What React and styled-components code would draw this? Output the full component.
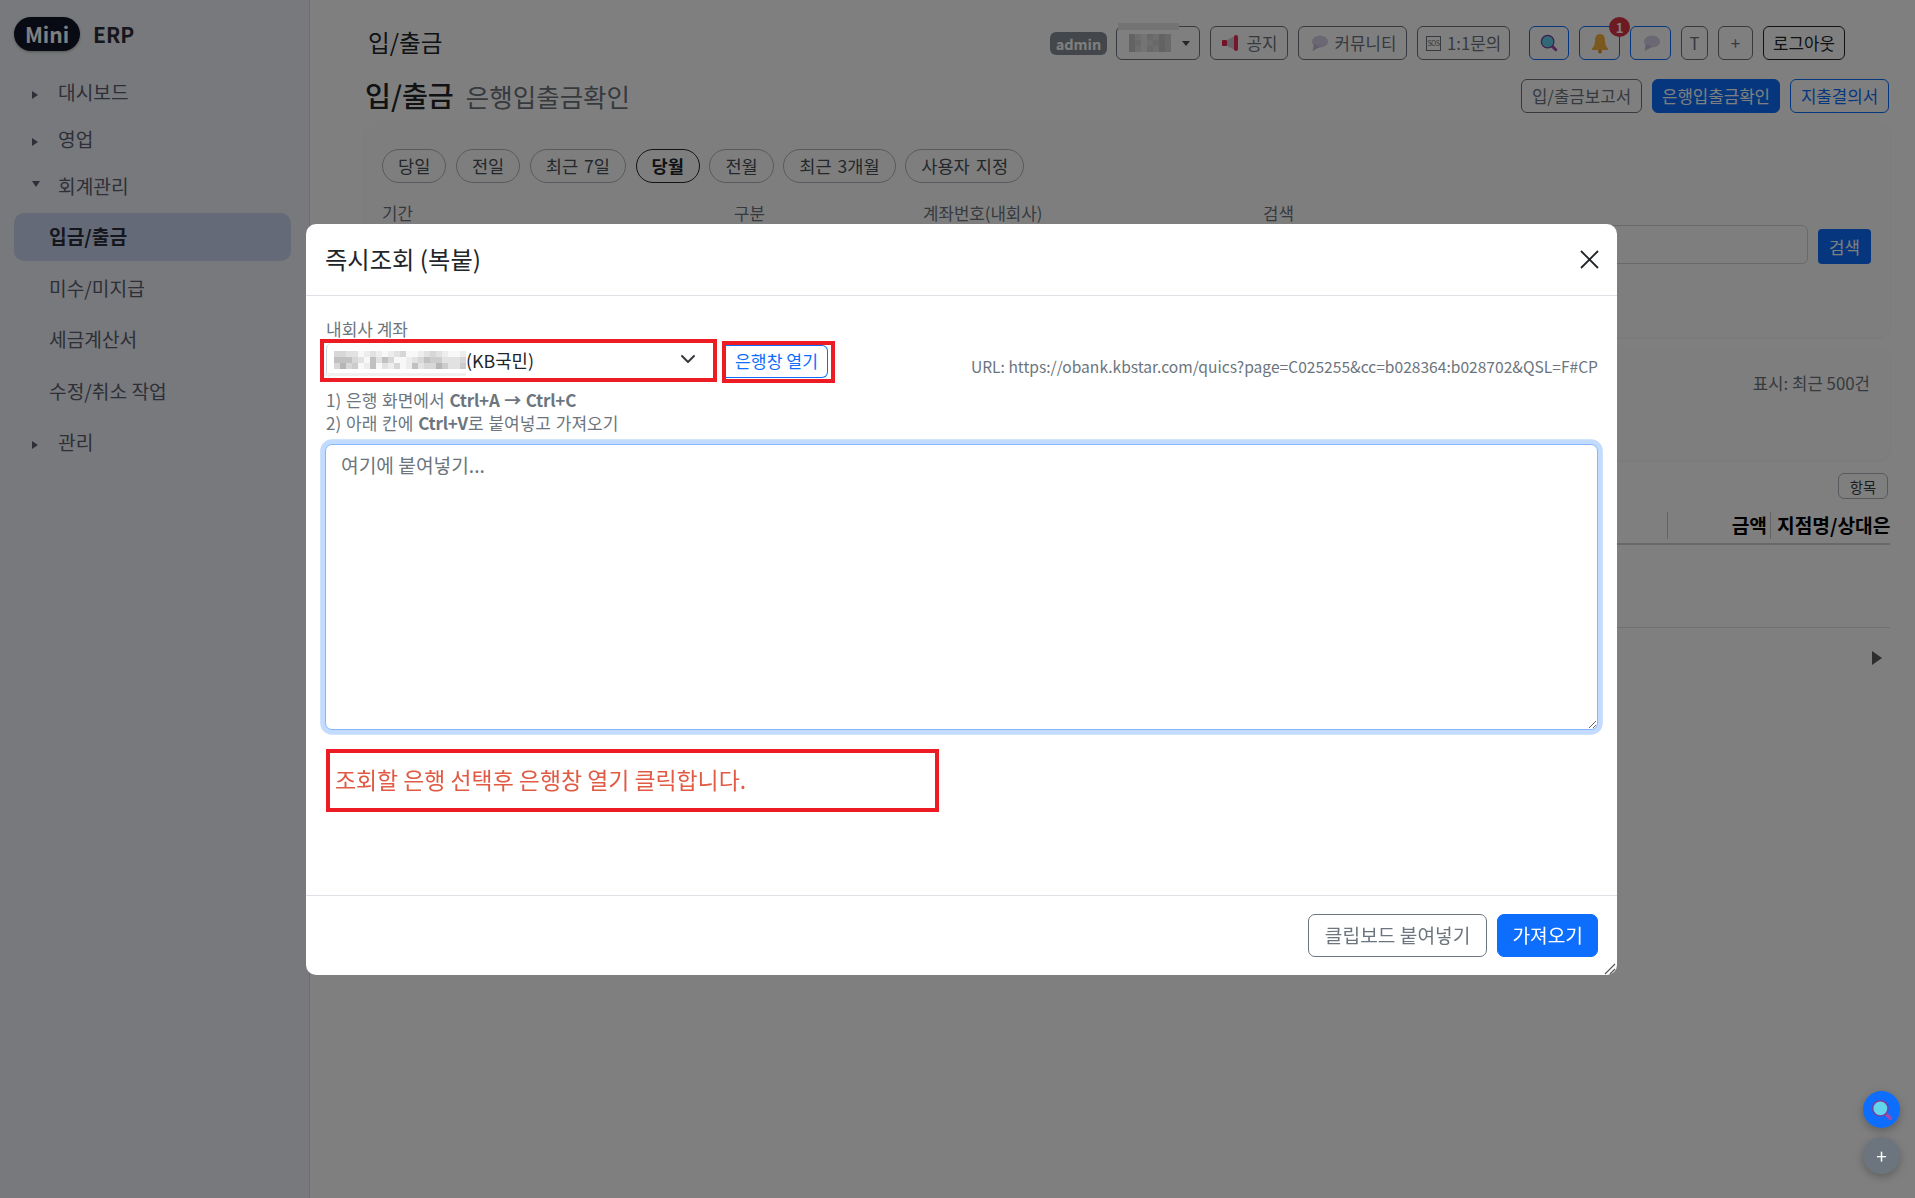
import React from "react";
import styled, { createGlobalStyle } from "styled-components";

const FONT = `"Noto Sans CJK KR", "Noto Sans", sans-serif`;

const GlobalStyle = createGlobalStyle`
  html, body {
    margin: 0;
    padding: 0;
    height: 100%;
    overflow: hidden;
    background: #fff;
    font-family: ${FONT};
    color: #212529;
  }
  * { box-sizing: border-box; }
`;

const MegaphoneIcon = () => (
  <svg width="20" height="20" viewBox="0 0 20 20">
    <rect x="1" y="7" width="5" height="6" rx="1" fill="#e8254e" />
    <path d="M6 7 L14 3 V17 L6 13 Z" fill="#c9c9d2" />
    <rect x="13" y="2" width="4" height="16" rx="2" fill="#ee2a5a" />
  </svg>
);

const BubbleIcon = () => (
  <svg width="20" height="20" viewBox="0 0 20 20">
    <ellipse cx="11" cy="8.5" rx="8" ry="6" fill="#d6cee6" />
    <path d="M5 11 L3.5 18 L11 14 Z" fill="#c4b9d8" />
  </svg>
);

const LensIcon = ({ size = 18 }) => (
  <svg width={size} height={size} viewBox="0 0 20 20">
    <path d="M12 12 L17.5 17.5" stroke="#a348a8" strokeWidth="3.4" strokeLinecap="round" />
    <circle cx="8.5" cy="8.5" r="7" fill="#62d4ec" stroke="#7a3f9c" strokeWidth="1.4" />
  </svg>
);

const BellIcon = () => (
  <svg width="20" height="22" viewBox="0 0 20 22">
    <path d="M10 2 C6 2 5 5.5 5 9 C5 12.5 4 14.5 2 16.5 V18 H18 V16.5 C16 14.5 15 12.5 15 9 C15 5.5 14 2 10 2 Z" fill="#f5b13c" />
    <circle cx="10" cy="19.5" r="2" fill="#e8902a" />
  </svg>
);

const ChevronDown = () => (
  <svg width="16" height="16" viewBox="0 0 16 16">
    <path d="M2 5 L8 11 L14 5" fill="none" stroke="#343a40" strokeWidth="2" strokeLinecap="round" strokeLinejoin="round" />
  </svg>
);

const CloseIcon = () => (
  <svg width="19" height="19" viewBox="0 0 19 19">
    <path d="M1 1 L18 18 M18 1 L1 18" stroke="#212529" strokeWidth="1.8" />
  </svg>
);

const ResizeGrip = () => (
  <svg width="12" height="12" viewBox="0 0 12 12">
    <path d="M1 11 L11 1 M6 11 L11 6" stroke="#555" strokeWidth="1.2" />
  </svg>
);

// 가려진 값(모자이크), 숫자가 클수록 어두움
const Mosaic = ({ rows, cell, top }) => (
  <svg width={rows[0].length * cell} height={rows.length * cell} shapeRendering="crispEdges">
    {rows.map((row, y) =>
      row.split("").map((c, x) => {
        const v = top - Number(c) * 11;
        return <rect key={`${x}-${y}`} x={x * cell} y={y * cell} width={cell} height={cell} fill={`rgb(${v},${v},${v})`} />;
      })
    )}
  </svg>
);

const ACCOUNT_MOSAIC = ["3322012101230012321001", "5553205253001235442223", "3634015021301523364224"];
const USER_MOSAIC = ["3102132", "3201232", "3102132"];

const PERIODS = ["당일", "전일", "최근 7일", "당월", "전월", "최근 3개월", "사용자 지정"];

const App = () => (
  <>
    <GlobalStyle />
    <Page>
      <Sidebar>
        <Logo>
          <LogoPill>Mini</LogoPill>
          <LogoText>ERP</LogoText>
        </Logo>
        <Nav>
          <NavItem><Caret />대시보드</NavItem>
          <NavItem><Caret />영업</NavItem>
          <NavItem><Caret $open />회계관리</NavItem>
          <SubItem $active>입금/출금</SubItem>
          <SubItem>미수/미지급</SubItem>
          <SubItem>세금계산서</SubItem>
          <SubItem>수정/취소 작업</SubItem>
          <NavItem $last><Caret />관리</NavItem>
        </Nav>
      </Sidebar>

      <Main>
        <TopBar>
          <TopTitle>입/출금</TopTitle>
          <TopActions>
            <RoleBadge>admin</RoleBadge>
            <UserButton>
              <UserStrip />
              <Mosaic rows={USER_MOSAIC} cell={6} top={232} />
              <SmallCaret />
            </UserButton>
            <ToolButton $w={78}><MegaphoneIcon />공지</ToolButton>
            <ToolButton $w={109}><BubbleIcon />커뮤니티</ToolButton>
            <ToolButton $w={93}><SosMark>SOS</SosMark>1:1문의</ToolButton>
            <ToolButton $w={40} $tone="blue" $ml={9}><LensIcon /></ToolButton>
            <BellWrap>
              <ToolButton $w={41} $tone="blue"><BellIcon /></ToolButton>
              <CountBadge>1</CountBadge>
            </BellWrap>
            <ToolButton $w={41} $tone="blue"><BubbleIcon /></ToolButton>
            <ToolButton $w={27}>T</ToolButton>
            <ToolButton $w={35}>+</ToolButton>
            <ToolButton $w={82} $tone="dark">로그아웃</ToolButton>
          </TopActions>
        </TopBar>

        <HeadingRow>
          <Heading>입/출금<HeadingSub>은행입출금확인</HeadingSub></Heading>
          <HeadingActions>
            <ToolButton $w={121}>입/출금보고서</ToolButton>
            <ToolButton $w={128} $tone="solid">은행입출금확인</ToolButton>
            <ToolButton $w={99} $tone="blue">지출결의서</ToolButton>
          </HeadingActions>
        </HeadingRow>

        <FilterCard>
          <Pills>
            {PERIODS.map((p) => (
              <Pill key={p} $active={p === "당월"}>{p}</Pill>
            ))}
          </Pills>
          <FilterGrid>
            <Field><FieldLabel>기간</FieldLabel><FieldInput /></Field>
            <Field><FieldLabel>구분</FieldLabel><FieldInput /></Field>
            <Field><FieldLabel>계좌번호(내회사)</FieldLabel><FieldInput /></Field>
            <Field><FieldLabel>검색</FieldLabel><FieldInput /></Field>
            <SearchButton>검색</SearchButton>
          </FilterGrid>
        </FilterCard>

        <SummaryCard>표시: 최근 500건</SummaryCard>

        <ColumnBar><ColumnButton>항목</ColumnButton></ColumnBar>

        <TableHead>
          <HeadCell />
          <HeadCell $right>금액</HeadCell>
          <HeadCell $clip>지점명/상대은행</HeadCell>
        </TableHead>
        <TableEmpty />
        <ScrollRow><ScrollArrow /></ScrollRow>
      </Main>

      <Backdrop />

      <Modal>
        <ModalHeader>
          <ModalTitle>즉시조회 (복붙)</ModalTitle>
          <CloseButton><CloseIcon /></CloseButton>
        </ModalHeader>
        <ModalBody>
          <SmallLabel>내회사 계좌</SmallLabel>
          <AccountRow>
            <SelectMark>
              <AccountSelect>
                <BlurValue>
                  <Mosaic rows={ACCOUNT_MOSAIC} cell={6} top={248} />
                  <BlurShadow />
                </BlurValue>
                (KB국민)
                <SelectChevron><ChevronDown /></SelectChevron>
              </AccountSelect>
            </SelectMark>
            <ButtonMark>
              <OpenButton>은행창 열기</OpenButton>
            </ButtonMark>
            <UrlText>URL: https://obank.kbstar.com/quics?page=C025255&amp;cc=b028364:b028702&amp;QSL=F#CP</UrlText>
          </AccountRow>
          <Steps>
            <div>1) 은행 화면에서 <b>Ctrl+A → Ctrl+C</b></div>
            <div>2) 아래 칸에 <b>Ctrl+V</b>로 붙여넣고 가져오기</div>
          </Steps>
          <PasteArea placeholder="여기에 붙여넣기..." />
          <NoticeBox>조회할 은행 선택후 은행창 열기 클릭합니다.</NoticeBox>
        </ModalBody>
        <ModalFooter>
          <GhostButton>클립보드 붙여넣기</GhostButton>
          <PrimaryButton>가져오기</PrimaryButton>
        </ModalFooter>
        <GripCorner><ResizeGrip /></GripCorner>
      </Modal>

      <FabStack>
        <Fab $bg="#0d6efd"><LensIcon size={22} /></Fab>
        <Fab $bg="#6c757d">+</Fab>
      </FabStack>
    </Page>
  </>
);

const Page = styled.div`
  display: flex;
  width: 100%;
  height: 1198px;
  overflow: hidden;
`;

const Sidebar = styled.aside`
  flex: 0 0 310px;
  height: 100%;
  padding: 17px 18px 0 14px;
  background: #f1f3f8;
  border-right: 1px solid #d8dbe2;
`;

const Logo = styled.div`
  display: flex;
  align-items: center;
  gap: 13px;
  height: 34px;
`;

const LogoPill = styled.div`
  display: flex;
  align-items: center;
  justify-content: center;
  width: 66px;
  height: 34px;
  border-radius: 17px;
  background: #111726;
  color: #fff;
  font-size: 21px;
  font-weight: 700;
  box-shadow: 0 1px 3px rgba(0, 0, 0, 0.3);
`;

const LogoText = styled.div`
  font-size: 21px;
  font-weight: 700;
  color: #2a2e3a;
`;

const Nav = styled.nav`
  display: flex;
  flex-direction: column;
  margin-top: 17.5px;
`;

const NavItem = styled.div`
  position: relative;
  display: flex;
  align-items: center;
  height: 47px;
  margin-top: ${(p) => (p.$last ? "3px" : 0)};
  padding-left: 44px;
  font-size: 19.2px;
  color: #5a6070;
`;

const Caret = styled.span`
  position: absolute;
  left: 18px;
  top: ${(p) => (p.$open ? "18px" : "22px")};
  width: 0;
  height: 0;
  ${(p) =>
    p.$open
      ? `border-left: 4px solid transparent;
         border-right: 4px solid transparent;
         border-top: 6px solid #5a6070;`
      : `border-top: 4px solid transparent;
         border-bottom: 4px solid transparent;
         border-left: 6px solid #5a6070;`}
`;

const SubItem = styled.div`
  display: flex;
  align-items: center;
  height: 48px;
  margin-top: 3.5px;
  padding: 0 0 2px 35px;
  border-radius: 10px;
  font-size: 19.2px;
  font-weight: ${(p) => (p.$active ? 700 : 400)};
  color: ${(p) => (p.$active ? "#2a2e3a" : "#5a6070")};
  background: ${(p) => (p.$active ? "#c9d5ee" : "transparent")};
`;

const Main = styled.main`
  flex: 1;
  min-width: 0;
  padding: 26px 25px 0 55px;
  background: #fff;
`;

const TopBar = styled.div`
  display: flex;
  align-items: center;
  justify-content: space-between;
  height: 34px;
  padding: 0 45px 0 3px;
`;

const TopTitle = styled.div`
  margin-top: -2px;
  font-size: 23.6px;
  color: #212529;
`;

const TopActions = styled.div`
  display: flex;
  align-items: center;
  gap: 10px;
`;

const RoleBadge = styled.span`
  display: flex;
  align-items: center;
  justify-content: center;
  width: 57px;
  height: 23px;
  margin-right: -1px;
  border-radius: 6px;
  background: #868e96;
  color: #fff;
  font-size: 14.5px;
  font-weight: 700;
`;

const UserButton = styled.div`
  position: relative;
  display: flex;
  align-items: center;
  width: 84px;
  height: 34px;
  padding-left: 12px;
  border: 1px solid #6c757d;
  border-radius: 6px;
`;

const UserStrip = styled.span`
  position: absolute;
  left: 1px;
  top: -4px;
  width: 61px;
  height: 7px;
  background: #e6e6e6;
`;

const SmallCaret = styled.span`
  position: absolute;
  right: 9px;
  top: 14px;
  width: 0;
  height: 0;
  border-left: 4px solid transparent;
  border-right: 4px solid transparent;
  border-top: 5px solid #495057;
`;

const TONES = {
  gray: "border: 1px solid #6c757d; color: #6c757d; background: transparent;",
  blue: "border: 1px solid #0d6efd; color: #0d6efd; background: transparent;",
  dark: "border: 1px solid #212529; color: #212529; background: transparent;",
  solid: "border: 1px solid #0d6efd; color: #fff; background: #0d6efd;",
};

const ToolButton = styled.button`
  display: flex;
  align-items: center;
  justify-content: center;
  gap: 6px;
  width: ${(p) => p.$w}px;
  height: 34px;
  margin-left: ${(p) => p.$ml || 0}px;
  padding: 0;
  border-radius: 6px;
  font-family: ${FONT};
  font-size: 16.8px;
  white-space: nowrap;
  ${(p) => TONES[p.$tone || "gray"]}
`;

const SosMark = styled.span`
  display: inline-flex;
  align-items: center;
  justify-content: center;
  width: 15px;
  height: 15px;
  border: 1px solid #6c757d;
  font-size: 7px;
  line-height: 1;
  letter-spacing: -0.5px;
`;

const BellWrap = styled.div`
  position: relative;
`;

const CountBadge = styled.span`
  position: absolute;
  right: -10px;
  top: -9px;
  display: flex;
  align-items: center;
  justify-content: center;
  width: 21px;
  height: 20px;
  border-radius: 50%;
  background: #dc3545;
  color: #fff;
  font-size: 13px;
  font-weight: 700;
`;

const HeadingRow = styled.div`
  display: flex;
  align-items: center;
  justify-content: space-between;
  height: 34px;
  margin-top: 19px;
`;

const Heading = styled.h1`
  margin: -4px 0 0;
  font-size: 28.2px;
  font-weight: 500;
  color: #212529;
`;

const HeadingSub = styled.small`
  margin-left: 12px;
  font-size: 25.5px;
  font-weight: 400;
  color: #6c757d;
`;

const HeadingActions = styled.div`
  display: flex;
  gap: 10px;
  padding-right: 1px;
`;

const FilterCard = styled.section`
  height: 215px;
  margin-top: 9px;
  padding: 27px 19px 0 17px;
  border-radius: 12px;
  background: #fdfdfd;
  box-shadow: 0 1px 4px rgba(0, 0, 0, 0.06);
`;

const Pills = styled.div`
  display: flex;
  gap: 9.5px;
`;

const Pill = styled.div`
  display: flex;
  align-items: center;
  height: 34px;
  padding: 0 15px 2px;
  border: 1px solid ${(p) => (p.$active ? "#212529" : "#adb5bd")};
  border-radius: 17px;
  font-size: 17.6px;
  word-spacing: 2px;
  font-weight: ${(p) => (p.$active ? 700 : 400)};
  color: ${(p) => (p.$active ? "#212529" : "#495057")};
`;

const FilterGrid = styled.div`
  display: grid;
  grid-template-columns: 342px 179px 330px 1fr 53px;
  column-gap: 10px;
  align-items: end;
  margin-top: 18px;
`;

const Field = styled.div`
  display: flex;
  flex-direction: column;
`;

const FieldLabel = styled.label`
  height: 24px;
  font-size: 16.8px;
  line-height: 24px;
  color: #6c757d;
`;

const FieldInput = styled.div`
  height: 39px;
  border: 1px solid #ced4da;
  border-radius: 6px;
`;

const SearchButton = styled.button`
  height: 35px;
  margin-bottom: 0;
  padding: 0;
  border: 0;
  border-radius: 4px;
  background: #0d6efd;
  color: #fff;
  font-family: ${FONT};
  font-size: 16.8px;
`;

const SummaryCard = styled.section`
  height: 113px;
  margin-top: 10px;
  padding: 24px 20px 0 0;
  border-radius: 12px;
  background: #fdfdfd;
  box-shadow: 0 1px 4px rgba(0, 0, 0, 0.06);
  font-size: 16.8px;
  line-height: 24px;
  text-align: right;
  color: #6c757d;
`;

const ColumnBar = styled.div`
  display: flex;
  justify-content: flex-end;
  margin-top: 13px;
  padding-right: 2px;
`;

const ColumnButton = styled.div`
  display: flex;
  align-items: center;
  justify-content: center;
  width: 50px;
  height: 26px;
  border: 1px solid #adb5bd;
  border-radius: 6px;
  font-size: 14.4px;
  color: #343a40;
`;

const TableHead = styled.div`
  display: grid;
  grid-template-columns: 1fr 103px 119px;
  height: 46px;
  padding-top: 13px;
  border-bottom: 2px solid #d0d0d0;
`;

const HeadCell = styled.div`
  height: 27px;
  padding: 0 3px 0 6px;
  border-right: 1px solid #c8c8c8;
  font-size: 19.2px;
  font-weight: 700;
  line-height: 27px;
  color: #000;
  white-space: nowrap;
  overflow: hidden;
  text-align: ${(p) => (p.$right ? "right" : "left")};
  ${(p) => p.$clip && "border-right: 0; padding-right: 0;"}
`;

const TableEmpty = styled.div`
  height: 83px;
  border-bottom: 1px solid #dee2e6;
`;

const ScrollRow = styled.div`
  display: flex;
  justify-content: flex-end;
  padding: 23px 8px 0 0;
`;

const ScrollArrow = styled.span`
  width: 0;
  height: 0;
  border-top: 7px solid transparent;
  border-bottom: 7px solid transparent;
  border-left: 10px solid #5a5a5a;
`;

const Backdrop = styled.div`
  position: fixed;
  inset: 0;
  background: rgba(0, 0, 0, 0.5);
`;

const Modal = styled.div`
  position: fixed;
  left: 306px;
  top: 224px;
  display: flex;
  flex-direction: column;
  width: 1311px;
  height: 751px;
  border-radius: 10px;
  background: #fff;
`;

const ModalHeader = styled.header`
  display: flex;
  align-items: center;
  justify-content: space-between;
  flex: 0 0 72px;
  padding: 0 18px 0 19px;
  border-bottom: 1px solid #dee2e6;
`;

const ModalTitle = styled.h5`
  margin: -3px 0 0;
  font-size: 24.3px;
  font-weight: 400;
  color: #212529;
`;

const CloseButton = styled.button`
  display: flex;
  padding: 0;
  border: 0;
  background: transparent;
`;

const ModalBody = styled.div`
  flex: 1;
  padding: 22px 19px 0 20px;
`;

const SmallLabel = styled.div`
  height: 21px;
  font-size: 17px;
  line-height: 22px;
  color: #6c757d;
`;

const AccountRow = styled.div`
  display: flex;
  align-items: flex-start;
  margin-left: -6px;
`;

const SelectMark = styled.div`
  flex: 0 0 397px;
  height: 43px;
  padding-left: 2px;
  border: 4px solid #ed1c24;
`;

const ButtonMark = styled.div`
  flex: 0 0 113px;
  height: 42px;
  margin: 2px 0 0 5px;
  padding-right: 3px;
  border: 4px solid #ed1c24;
`;

const AccountSelect = styled.div`
  position: relative;
  display: flex;
  align-items: center;
  height: 35px;
  padding: 0 0 2px 7px;
  border-left: 1px solid #ced4da;
  border-radius: 6px;
  font-size: 17.8px;
  color: #212529;
`;

const BlurValue = styled.span`
  position: relative;
  display: flex;
  height: 18px;
`;

const BlurShadow = styled.span`
  position: absolute;
  left: -10px;
  right: 0;
  bottom: -7px;
  height: 3px;
  background: #f0f0f0;
`;

const SelectChevron = styled.span`
  position: absolute;
  right: 17px;
  top: 8px;
  display: flex;
`;

const OpenButton = styled.button`
  display: block;
  width: 100%;
  height: 33px;
  padding: 0 0 2px;
  border: 1px solid #0d6efd;
  border-left: 0;
  border-radius: 0 6px 6px 0;
  background: #fff;
  color: #0d6efd;
  font-family: ${FONT};
  font-size: 17.2px;
  white-space: nowrap;
`;

const UrlText = styled.div`
  margin: 17px 0 0 auto;
  font-size: 15.6px;
  line-height: 20px;
  color: #6c757d;
  white-space: nowrap;
`;

const Steps = styled.div`
  margin-top: 5px;
  font-size: 17px;
  line-height: 23px;
  word-spacing: 1px;
  color: #6c757d;
  b {
    letter-spacing: -0.2px;
  }
`;

const PasteArea = styled.textarea`
  display: block;
  width: calc(100% + 1px);
  height: 286px;
  margin: 10px -1px 0;
  padding: 6px 15px;
  border: 1px solid #86b7fe;
  border-radius: 7px;
  outline: 0;
  box-shadow: 0 0 0 4.8px rgba(13, 110, 253, 0.25);
  font-family: ${FONT};
  font-size: 19.2px;
  line-height: 1.5;
  &::placeholder {
    color: #6c757d;
    opacity: 1;
  }
`;

const NoticeBox = styled.div`
  display: flex;
  align-items: center;
  width: 613px;
  height: 63px;
  margin-top: 19px;
  padding: 0 0 4px 5px;
  border: 4px solid #ed1c24;
  color: #e05a44;
  font-size: 22.9px;
  white-space: nowrap;
`;

const ModalFooter = styled.footer`
  display: flex;
  justify-content: flex-end;
  gap: 10px;
  flex: 0 0 80px;
  padding: 18px 19px 0 0;
  border-top: 1px solid #dee2e6;
`;

const GhostButton = styled.button`
  height: 43px;
  padding: 0 16px 2px;
  border: 1px solid #6c757d;
  border-radius: 7px;
  background: #fff;
  color: #6c757d;
  font-family: ${FONT};
  font-size: 19.2px;
`;

const PrimaryButton = styled(GhostButton)`
  padding: 0 14px 2px;
  border-color: #0d6efd;
  background: #0d6efd;
  color: #fff;
`;

const GripCorner = styled.div`
  position: absolute;
  right: 1px;
  bottom: 0;
  display: flex;
`;

const FabStack = styled.div`
  position: fixed;
  right: 15px;
  bottom: 24px;
  display: flex;
  flex-direction: column;
  gap: 9px;
`;

const Fab = styled.button`
  display: flex;
  align-items: center;
  justify-content: center;
  width: 37px;
  height: 37px;
  padding: 0;
  border: 0;
  border-radius: 50%;
  background: ${(p) => p.$bg};
  color: #fff;
  font-family: ${FONT};
  font-size: 19px;
  box-shadow: 0 3px 8px rgba(0, 0, 0, 0.25);
`;

export default App;
